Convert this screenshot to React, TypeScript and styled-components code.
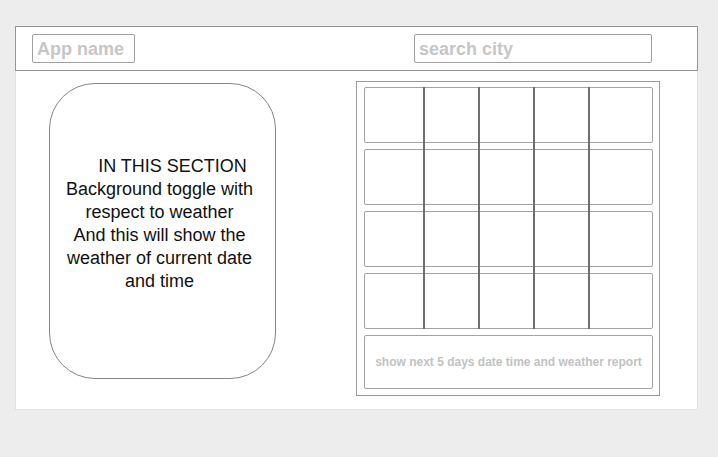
import React from "react";
import styled, { createGlobalStyle } from "styled-components";

const GlobalStyle = createGlobalStyle`
  html, body {
    margin: 0;
    padding: 0;
    background: #ededed;
    font-family: "Liberation Sans", Arial, sans-serif;
  }
`;

const Page = styled.div`
  padding: 26px 20px 0 15px;
  width: 683px;
`;

const Header = styled.header`
  box-sizing: border-box;
  height: 45px;
  border: 1px solid #959595;
  background: #fff;
  display: flex;
  justify-content: space-between;
  align-items: flex-start;
  padding: 7px 45px 0 16px;
`;

const Field = styled.div<{ $width: number }>`
  box-sizing: border-box;
  width: ${(p) => p.$width}px;
  height: 29px;
  border: 1px solid #a0a0a0;
  border-radius: 2px;
  padding: 1px 0 0 4px;
  display: flex;
  align-items: center;
  font-size: 18px;
  font-weight: bold;
  color: #c6c6c6;
`;

const Body = styled.main`
  box-sizing: border-box;
  height: 339px;
  background: #fff;
  border: 1px solid #e2e2e2;
  border-top: none;
  display: flex;
  align-items: flex-start;
  padding-left: 33px;
`;

const WeatherCard = styled.section`
  box-sizing: border-box;
  margin-top: 12px;
  width: 227px;
  height: 296px;
  border: 1px solid #858585;
  border-radius: 46px;
  padding: 71px 6px 0 0;
  text-align: center;
  font-size: 18px;
  line-height: 23px;
  color: #111;
  white-space: nowrap;
`;

const Indent = styled.span`
  padding-left: 26px;
`;

const Forecast = styled.section`
  box-sizing: border-box;
  margin: 10px 0 0 80px;
  width: 304px;
  height: 315px;
  border: 1px solid #9a9a9a;
  padding: 5px 6px 6px 7px;
  display: flex;
  flex-direction: column;
  gap: 6px;
`;

const GridArea = styled.div`
  position: relative;
  display: flex;
  flex-direction: column;
  gap: 6px;
`;

const Row = styled.div<{ $height: number }>`
  box-sizing: border-box;
  height: ${(p) => p.$height}px;
  border: 1px solid #a3a3a3;
  border-radius: 2px;
  display: flex;
  align-items: center;
  justify-content: center;
`;

const Divider = styled.div<{ $left: number }>`
  position: absolute;
  top: 0;
  bottom: 0;
  left: ${(p) => p.$left}px;
  width: 2px;
  background: #6e6e6e;
`;

const Note = styled.span`
  font-size: 12px;
  font-weight: bold;
  color: #c2c2c2;
`;

export default function App() {
  return (
    <>
      <GlobalStyle />
      <Page>
        <Header>
          <Field $width={103}>App name</Field>
          <Field $width={238}>search city</Field>
        </Header>
        <Body>
          <WeatherCard>
            <Indent>IN THIS SECTION</Indent>
            <br />
            Background toggle with
            <br />
            respect to weather
            <br />
            And this will show the
            <br />
            weather of current date
            <br />
            and time
          </WeatherCard>
          <Forecast>
            <GridArea>
              {[0, 1, 2, 3].map((i) => (
                <Row key={i} $height={56} />
              ))}
              {[59, 114, 169, 224].map((l) => (
                <Divider key={l} $left={l} />
              ))}
            </GridArea>
            <Row $height={54}>
              <Note>show next 5 days date time and weather report</Note>
            </Row>
          </Forecast>
        </Body>
      </Page>
    </>
  );
}
